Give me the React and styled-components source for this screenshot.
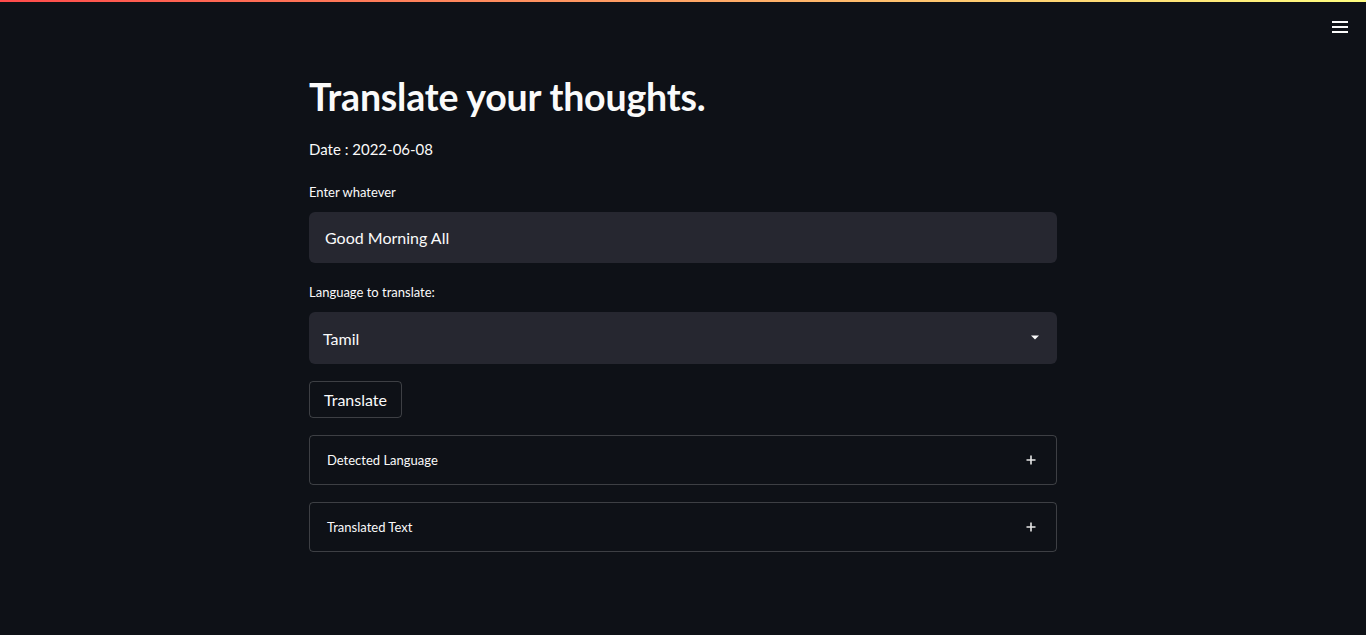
import React from 'react';
import styled, { createGlobalStyle } from 'styled-components';

const GlobalStyle = createGlobalStyle`
    html, body {
        margin: 0;
        padding: 0;
        background: #0e1117;
        color: #fafafa;
        font-family: Lato, "Noto Sans", sans-serif;
    }
    * {
        box-sizing: border-box;
    }
`

const Decoration = styled.div`
    height: 2px;
    background-image: linear-gradient(90deg, #ff4b4b, #ffff80);
`

const Page = styled.div`
    min-height: 633px;
    position: relative;
`

const MenuButton = styled.button`
    position: absolute;
    top: 13px;
    right: 14px;
    width: 24px;
    height: 24px;
    padding: 0;
    border: none;
    background: transparent;
    color: #fafafa;
    display: flex;
    align-items: center;
    justify-content: center;
`

const Main = styled.main`
    width: 748px;
    margin: 0 auto;
    padding-top: 71px;
    display: flex;
    flex-direction: column;
`

const Title = styled.h1`
    margin: 0;
    font-size: 37.5px;
    font-weight: 700;
    line-height: 48px;
    letter-spacing: -0.2px;
`

const DateLine = styled.p`
    margin: 16px 0 0;
    font-size: 15px;
    line-height: 24px;
`

const Label = styled.label`
    display: block;
    margin-top: ${(p) => p.$top}px;
    font-size: 13px;
    line-height: 20px;
`

const Field = styled.div`
    margin-top: 10px;
    height: ${(p) => p.$height}px;
    background: #262730;
    border-radius: 6px;
    display: flex;
    align-items: center;
    justify-content: space-between;
    padding: 0 ${(p) => p.$padRight}px 0 ${(p) => p.$padLeft}px;
    font-size: 16px;
    color: #fafafa;
`

const Button = styled.button`
    align-self: flex-start;
    margin-top: 17px;
    height: 37px;
    padding: 0 14px;
    background: transparent;
    border: 1px solid rgba(250, 250, 250, 0.2);
    border-radius: 4px;
    color: #fafafa;
    font-family: inherit;
    font-size: 16px;
`

const Expander = styled.div`
    margin-top: ${(p) => p.$top}px;
    height: 50px;
    border: 1px solid rgba(250, 250, 250, 0.2);
    border-radius: 4px;
    display: flex;
    align-items: center;
    justify-content: space-between;
    padding: 0 20px 0 17px;
    font-size: 13px;
`

const Caret = () => (
    <svg width="10" height="6" viewBox="0 0 10 6">
        <path d="M1 0.5h8L5 4.5z" fill="#fafafa" />
    </svg>
)

const Plus = () => (
    <svg width="10" height="10" viewBox="0 0 10 10">
        <path d="M5 0.5v9M0.5 5h9" stroke="#e6e6e6" strokeWidth="1.6" />
    </svg>
)

const App = () => {
    return (
        <>
            <GlobalStyle />
            <Decoration />
            <Page>
                <MenuButton aria-label="menu">
                    <svg width="16" height="12" viewBox="0 0 16 12">
                        <path d="M0 1h16M0 6h16M0 11h16" stroke="#fafafa" strokeWidth="2" />
                    </svg>
                </MenuButton>
                <Main>
                    <Title>Translate your thoughts.</Title>
                    <DateLine>Date : 2022-06-08</DateLine>
                    <Label $top={21}>Enter whatever</Label>
                    <Field $height={51} $padLeft={16} $padRight={16}>Good Morning All</Field>
                    <Label $top={19}>Language to translate:</Label>
                    <Field $height={52} $padLeft={14} $padRight={17}>
                        <span>Tamil</span>
                        <Caret />
                    </Field>
                    <Button>Translate</Button>
                    <Expander $top={17}>
                        <span>Detected Language</span>
                        <Plus />
                    </Expander>
                    <Expander $top={17}>
                        <span>Translated Text</span>
                        <Plus />
                    </Expander>
                </Main>
            </Page>
        </>
    );
};

export default App;
